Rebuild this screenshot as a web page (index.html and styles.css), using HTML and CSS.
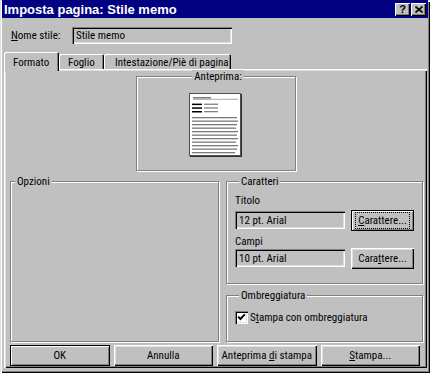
FILE: index.html
```html
<!doctype html>
<html lang="it">
<head>
  <meta charset="UTF-8">
  <title>Imposta pagina</title>
  <link rel="stylesheet" href="styles.css">
</head>
<body>
  <div class="window">
    <div class="titlebar">
      <span class="title">Imposta pagina: Stile memo</span>
      <div class="caption-btns">
        <span class="cap-btn help">?</span>
        <span class="cap-btn close">
          <svg width="8" height="7" viewBox="0 0 8 7"><path d="M0.5 0.5l7 6M7.5 0.5l-7 6" stroke="#000" stroke-width="1.7" fill="none"/></svg>
        </span>
      </div>
    </div>

    <div class="name-row">
      <span class="name-label"><u>N</u>ome stile:</span>
      <div class="field name-field">Stile memo</div>
    </div>

    <div class="tabs">
      <div class="tab active">Formato</div>
      <div class="tab foglio">Foglio</div>
      <div class="tab intest">Intestazione/Piè di pagina</div>
    </div>

    <div class="panel">
      <div class="group preview">
        <span class="group-title">Anteprima:</span>
        <svg class="page" width="53" height="64" viewBox="0 0 53 64">
          <rect x="0.5" y="0.5" width="51" height="62" fill="#fff" stroke="#505050"/>
          <path d="M52.5 1v63M1 63.5h52" stroke="#303030"/>
          <rect x="4" y="4" width="18" height="1.6" fill="#808080"/>
          <rect x="4" y="5.8" width="45" height="1" fill="#a8a8a8"/>
          <rect x="3" y="10.6" width="10" height="1.5" fill="#000"/>
          <rect x="3" y="14.3" width="10" height="1.5" fill="#000"/>
          <rect x="3" y="18" width="10" height="1.5" fill="#000"/>
          <rect x="15" y="10.6" width="14" height="1.3" fill="#808080"/>
          <rect x="15" y="14.3" width="14" height="1.3" fill="#808080"/>
          <rect x="15" y="18" width="14" height="1.3" fill="#808080"/>
          <g fill="#7a7a7a">
            <rect x="3" y="24" width="45" height="1.3"/>
            <rect x="3" y="27.5" width="46" height="1.3"/>
            <rect x="3" y="31" width="45" height="1.3"/>
            <rect x="3" y="34.5" width="44" height="1.3"/>
            <rect x="3" y="38" width="46" height="1.3"/>
            <rect x="3" y="41.5" width="45" height="1.3"/>
            <rect x="3" y="45" width="46" height="1.3"/>
            <rect x="3" y="48.5" width="44" height="1.3"/>
            <rect x="3" y="52" width="46" height="1.3"/>
            <rect x="3" y="55.5" width="45" height="1.3"/>
            <rect x="3" y="59" width="43" height="1.3"/>
          </g>
        </svg>
      </div>

      <div class="lower">
        <div class="group options">
          <span class="group-title">Opzioni</span>
        </div>
        <div class="right-col">
          <div class="group fonts">
            <span class="group-title">Caratteri</span>
            <div class="font-label">Titolo</div>
            <div class="font-row">
              <div class="field font-field">12 pt. Arial</div>
              <div class="btn default font-btn"><span class="focus"><u>C</u>arattere...</span></div>
            </div>
            <div class="font-label">Campi</div>
            <div class="font-row">
              <div class="field font-field">10 pt. Arial</div>
              <div class="btn font-btn"><span>Cara<u>t</u>tere...</span></div>
            </div>
          </div>
          <div class="group shading">
            <span class="group-title">Ombreggiatura</span>
            <div class="check-row">
              <span class="checkbox">
                <svg width="9" height="9" viewBox="0 0 9 9"><path d="M1.2 3.6l2.2 2.4 4.4-4.6" stroke="#000" stroke-width="1.9" fill="none"/></svg>
              </span>
              <span>S<u>t</u>ampa con ombreggiatura</span>
            </div>
          </div>
        </div>
      </div>

      <div class="buttons">
        <div class="btn default">OK</div>
        <div class="btn">Annulla</div>
        <div class="btn"><span>Anteprima <u>d</u>i stampa</span></div>
        <div class="btn"><span><u>S</u>tampa...</span></div>
      </div>
    </div>
  </div>
</body>
</html>
```

FILE: styles.css
```css
*{margin:0;
  padding:0;
  box-sizing:border-box;}
body{background:#c0c0c0;
     font-family:"Roboto Condensed","Liberation Sans",Arial,sans-serif;
     font-size:11px;
     line-height:13px;
     color:#000;}
u{text-decoration:underline;text-underline-offset:1px;}

/* window frame */
.window{width:430px;height:373px;
        padding:0 2px 2px 2px;
        background:#c0c0c0;
        box-shadow:inset 1px 1px 0 #dfdfdf,inset 2px 2px 0 #fff,
                   inset -1px -1px 0 #000,inset -2px -2px 0 #808080;}
.titlebar{height:18px;
          display:flex;
          align-items:center;
          padding:0 2px 0 2px;
          background:#000080;
          color:#fff;}
.title{font-family:"Liberation Sans",Arial,sans-serif;font-weight:bold;font-size:13px;}
.caption-btns{margin-left:auto;display:flex;gap:1px;}
.cap-btn{width:15px;height:13px;
         display:flex;align-items:center;justify-content:center;
         background:#c0c0c0;color:#000;
         font-family:"Liberation Sans",Arial,sans-serif;
         font-weight:bold;font-size:11px;
         box-shadow:inset 1px 1px 0 #fff,inset -1px -1px 0 #000,inset -2px -2px 0 #808080;}

/* sunken text box */
.field{height:17px;
       display:flex;align-items:center;
       padding-left:4px;
       background:#c0c0c0;
       white-space:nowrap;
       box-shadow:inset 1px 1px 0 #808080,inset 2px 2px 0 #000,
                  inset -1px -1px 0 #fff,inset -2px -2px 0 #dfdfdf;}

.name-row{display:flex;align-items:center;height:17px;margin-top:9px;padding-left:9px;}
.name-label{width:61px;}
.name-field{width:160px;}

/* tabs */
.tabs{display:flex;align-items:flex-end;height:17px;margin:8px 0 0 2px;}
.tab{position:relative;
     height:15px;
     padding:2px 0 0 9px;
     white-space:nowrap;
     border-radius:2px 2px 0 0;
     box-shadow:inset 1px 1px 0 #fff,inset -1px 0 0 #000,inset -2px 0 0 #808080;}
.tab.active{width:55px;height:19px;margin-bottom:-2px;padding-top:4px;z-index:1;background:#c0c0c0;}
.foglio{width:45px;}
.intest{width:127px;padding-left:11px;}

.panel{height:299px;
       margin:0 1px 0 2px;
       padding:7px 7px 0 6px;
       box-shadow:inset 1px 1px 0 #fff,inset 2px 2px 0 #dfdfdf,
                  inset -1px -1px 0 #000,inset -2px -2px 0 #808080;}

/* etched group boxes */
.group{border:1px solid #808080;
       box-shadow:inset 1px 1px 0 #fff,1px 1px 0 #fff;}
.group-title{display:block;
             width:fit-content;
             margin:-7px 0 0 4px;
             padding:0 2px;
             background:#c0c0c0;}

.preview{width:160px;height:95px;margin-left:126px;
         display:flex;flex-direction:column;align-items:center;}
.page{display:block;margin-top:10px;margin-left:-2px;}

.lower{display:grid;grid-template-columns:209px 1fr;gap:7px;height:161px;margin-top:10px;}
.right-col{display:flex;flex-direction:column;}
.fonts{height:103px;padding:0 8px;}
.font-label{margin-top:6px;}
.font-label + .font-row + .font-label{margin-top:5px;}
.font-row{display:flex;align-items:center;gap:6px;height:20px;margin-top:3px;}
.font-label + .font-row + .font-label + .font-row{margin-top:0;}
.font-field{width:110px;height:18px;}
.font-btn{width:63px;height:21px;}
.shading{flex:1;margin-top:11px;padding:0 8px;}
.check-row{display:flex;align-items:center;gap:2px;margin-top:9px;height:13px;}
.checkbox{width:13px;height:13px;
          display:flex;align-items:center;justify-content:center;
          background:#fff;
          box-shadow:inset 1px 1px 0 #808080,inset 2px 2px 0 #000,
                     inset -1px -1px 0 #fff,inset -2px -2px 0 #dfdfdf;}

/* push buttons */
.btn{display:flex;align-items:center;justify-content:center;
     background:#c0c0c0;
     white-space:nowrap;
     box-shadow:inset 1px 1px 0 #fff,inset -1px -1px 0 #000,
                inset -2px -2px 0 #808080,inset 2px 2px 0 #dfdfdf;}
.btn.default{border:1px solid #000;
             box-shadow:inset 1px 1px 0 #fff,inset -1px -1px 0 #808080;}
.focus{outline:1px dotted #000;outline-offset:1px;padding:0 1px;}

.buttons{display:grid;grid-template-columns:repeat(4,1fr);gap:4px;height:21px;margin-top:3px;}
```
